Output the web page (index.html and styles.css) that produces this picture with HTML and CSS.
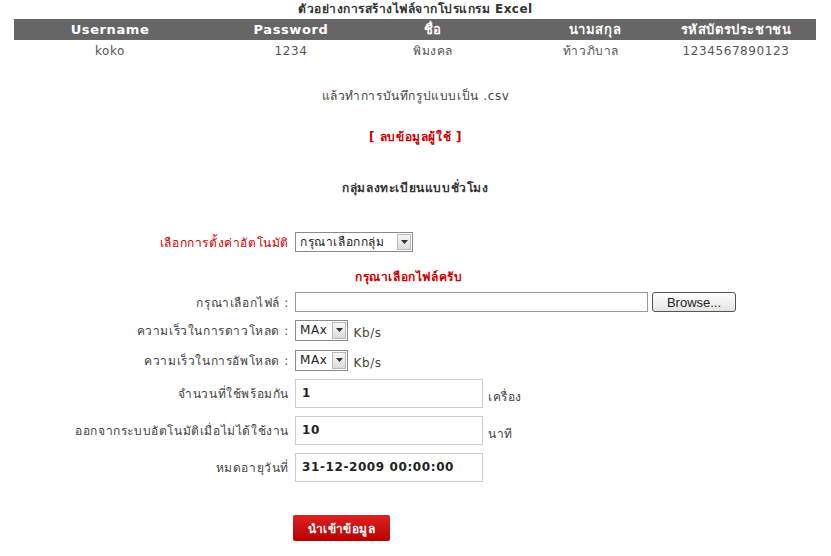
FILE: index.html
```html
<!DOCTYPE html>
<html lang="th">
<head>
<meta charset="utf-8">
<title>นำเข้าข้อมูลผู้ใช้</title>
<link rel="stylesheet" href="styles.css">
</head>
<body>
<div class="page">
  <div class="title">ตัวอย่างการสร้างไฟล์จากโปรแกรม Excel</div>
  <div class="sample">
    <div class="row head">
      <div class="c1">Username</div>
      <div class="c2">Password</div>
      <div class="c3">ชื่อ</div>
      <div class="c4">นามสกุล</div>
      <div class="c5">รหัสบัตรประชาชน</div>
    </div>
    <div class="row body">
      <div class="c1">koko</div>
      <div class="c2">1234</div>
      <div class="c3">พิมงคล</div>
      <div class="c4">ท้าวภิบาล</div>
      <div class="c5">1234567890123</div>
    </div>
  </div>
  <div class="note">แล้วทำการบันทึกรูปแบบเป็น .csv</div>
  <div class="del"><a href="#">[ ลบข้อมูลผู้ใช้ ]</a></div>
  <div class="group">กลุ่มลงทะเบียนแบบชั่วโมง</div>

  <div class="form">
    <div class="frow r-auto">
      <div class="lbl red">เลือกการตั้งค่าอัตโนมัติ</div>
      <div class="fld">
        <div class="sel wide"><span class="val">กรุณาเลือกกลุ่ม</span><span class="arr"><svg width="9" height="5" viewBox="0 0 9 5"><path d="M1 0h7L4.5 4z" fill="#333"/></svg></span></div>
      </div>
    </div>

    <div class="warn">กรุณาเลือกไฟล์ครับ</div>

    <div class="frow r-file">
      <div class="lbl">กรุณาเลือกไฟล์ :</div>
      <div class="fld">
        <div class="filebox"></div>
        <button class="browse" type="button">Browse...</button>
      </div>
    </div>

    <div class="frow r-down">
      <div class="lbl">ความเร็วในการดาวโหลด :</div>
      <div class="fld">
        <div class="sel"><span class="val">MAx</span><span class="arr"><svg width="9" height="5" viewBox="0 0 9 5"><path d="M1 0h7L4.5 4z" fill="#333"/></svg></span></div>
        <span class="unit">Kb/s</span>
      </div>
    </div>

    <div class="frow r-up">
      <div class="lbl">ความเร็วในการอัพโหลด :</div>
      <div class="fld">
        <div class="sel"><span class="val">MAx</span><span class="arr"><svg width="9" height="5" viewBox="0 0 9 5"><path d="M1 0h7L4.5 4z" fill="#333"/></svg></span></div>
        <span class="unit">Kb/s</span>
      </div>
    </div>

    <div class="frow r-box">
      <div class="lbl">จำนวนที่ใช้พร้อมกัน</div>
      <div class="fld tall">
        <div class="box">1</div>
        <span class="suffix">เครื่อง</span>
      </div>
    </div>

    <div class="frow r-box">
      <div class="lbl">ออกจากระบบอัตโนมัติเมื่อไม่ได้ใช้งาน</div>
      <div class="fld tall">
        <div class="box">10</div>
        <span class="suffix">นาที</span>
      </div>
    </div>

    <div class="frow r-box">
      <div class="lbl">หมดอายุวันที่</div>
      <div class="fld tall">
        <div class="box">31-12-2009 00:00:00</div>
      </div>
    </div>

    <div class="frow r-submit">
      <div class="lbl"></div>
      <div class="fld">
        <button class="go" type="button">นำเข้าข้อมูล</button>
      </div>
    </div>
  </div>
</div>
</body>
</html>
```

FILE: styles.css
```css
html, body {
  margin: 0;
  padding: 0;
  background: #fff;
}
body {
  font-family: "DejaVu Sans", "Noto Sans", sans-serif;
  font-size: 12px;
  color: #444;
  letter-spacing: 0.6px;
}
.page {
  width: 831px;
}
.title {
  text-align: center;
  font-weight: bold;
  font-size: 12px;
  color: #333;
  height: 19px;
  line-height: 19px;
  letter-spacing: 0.5px;
}
.sample {
  margin: 0 15px 0 14px;
}
.row {
  display: grid;
  grid-template-columns: 192px 170px 104px 196px 140px;
}
.row > div {
  text-align: center;
  white-space: nowrap;
}
.row .c3 { padding-left: 10px; }
.row .c4 { padding-left: 34px; }
.row .c5 { padding-right: 20px; }
.body .c4 { padding-left: 26px; }
.head {
  background: #666;
  color: #fff;
  font-weight: bold;
  font-size: 13px;
  height: 21px;
  line-height: 21px;
}
.body {
  height: 22px;
  line-height: 22px;
  color: #555;
}
.note {
  text-align: center;
  margin-top: 25px;
  line-height: 18px;
}
.del {
  text-align: center;
  margin-top: 23px;
  line-height: 18px;
}
.del a {
  color: #c00;
  font-weight: bold;
  text-decoration: none;
}
.group {
  text-align: center;
  font-weight: bold;
  color: #333;
  margin-top: 33px;
  line-height: 18px;
}
.form {
  margin-top: 35px;
  display: flex;
  flex-direction: column;
}
.frow {
  display: grid;
  grid-template-columns: 289px 1fr;
  column-gap: 6px;
  align-items: center;
}
.r-file { margin-top: 6px; height: 20px; }
.r-down { margin-top: 8px; height: 21px; }
.r-up { margin-top: 9px; height: 21px; }
.r-box { margin-top: 8px; height: 29px; }
.r-submit { margin-top: 33px; height: 26px; }
.lbl {
  text-align: right;
  white-space: nowrap;
}
.red {
  color: #c00;
}
.warn {
  color: #c00;
  font-weight: bold;
  padding-left: 355px;
  margin-top: 16px;
  line-height: 18px;
}
.fld {
  display: flex;
  align-items: center;
  gap: 5px;
  height: 100%;
}
.sel {
  display: inline-flex;
  align-items: stretch;
  height: 20px;
  box-sizing: border-box;
  border: 1px solid #8a8a8a;
  background: #fff;
  padding: 1px;
}
.r-down .sel, .r-up .sel { height: 21px; }
.sel .val {
  padding: 0 5px 0 3px;
  line-height: 17px;
  color: #222;
}
.sel .arr {
  width: 14px;
  display: flex;
  align-items: center;
  justify-content: center;
  border: 1px solid #b9b9b9;
  background: linear-gradient(#f7f7f7, #dcdcdc);
  box-sizing: border-box;
}
.sel.wide .val { width: 92px; }
.unit {
  margin-top: 5px;
}
.filebox {
  width: 353px;
  height: 20px;
  box-sizing: border-box;
  border: 1px solid #9a9a9a;
}
.browse {
  width: 84px;
  height: 20px;
  margin-left: -1px;
  border: 1px solid #555;
  border-radius: 3px;
  background: linear-gradient(#fff, #e4e4e0);
  font-family: "Liberation Sans", Arial, sans-serif;
  font-size: 13px;
  color: #222;
  padding: 0;
  letter-spacing: 0;
}
.fld.tall {
  align-items: flex-end;
}
.box {
  width: 188px;
  height: 29px;
  box-sizing: border-box;
  border: 1px solid #ccc;
  padding-left: 6px;
  line-height: 27px;
  font-weight: bold;
  color: #222;
  font-size: 12px;
}
.suffix {
  margin-bottom: 2px;
}
.go {
  margin-left: -2px;
  width: 97px;
  height: 26px;
  border: 0;
  border-radius: 2px;
  background: linear-gradient(#dd2222, #b80000);
  color: #fff;
  font-weight: bold;
  font-family: "DejaVu Sans", sans-serif;
  font-size: 12px;
  letter-spacing: 0.4px;
}
```
